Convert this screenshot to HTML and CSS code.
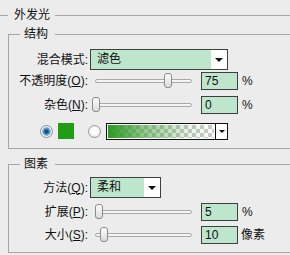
FILE: index.html
```html
<!DOCTYPE html>
<html lang="zh-CN">
<head>
  <meta charset="UTF-8">
  <title>外发光</title>
  <link rel="stylesheet" href="styles.css">
</head>
<body>
  <fieldset class="panel">
    <legend class="panel-title">外发光</legend>

    <fieldset class="group group-top">
      <legend class="group-title">结构</legend>

      <div class="row row-tall">
        <span class="label">混合模式:</span>
        <div class="select select-wide">
          <span class="select-text">滤色</span>
          <span class="select-btn"><i class="arrow"></i></span>
        </div>
      </div>

      <div class="row row-opacity">
        <span class="label">不透明度(<u>O</u>):</span>
        <div class="slider"><div class="track"></div><div class="thumb" style="left: 74px"></div></div>
        <div class="field">75</div>
        <span class="unit">%</span>
      </div>

      <div class="row row-noise">
        <span class="label">杂色(<u>N</u>):</span>
        <div class="slider"><div class="track"></div><div class="thumb" style="left: 2px"></div></div>
        <div class="field">0</div>
        <span class="unit">%</span>
      </div>

      <div class="row row-color">
        <span class="radio checked"></span>
        <span class="swatch"></span>
        <span class="radio"></span>
        <div class="gradient">
          <span class="gradient-fill"></span>
          <span class="gradient-btn"><i class="arrow arrow-small"></i></span>
        </div>
      </div>
    </fieldset>

    <fieldset class="group group-bottom">
      <legend class="group-title">图素</legend>

      <div class="row row-tall">
        <span class="label">方法(<u>Q</u>):</span>
        <div class="select select-narrow">
          <span class="select-text">柔和</span>
          <span class="select-btn"><i class="arrow"></i></span>
        </div>
      </div>

      <div class="row row-spread">
        <span class="label">扩展(<u>P</u>):</span>
        <div class="slider"><div class="track"></div><div class="thumb" style="left: 5px"></div></div>
        <div class="field">5</div>
        <span class="unit">%</span>
      </div>

      <div class="row row-size">
        <span class="label">大小(<u>S</u>):</span>
        <div class="slider"><div class="track"></div><div class="thumb" style="left: 10px"></div></div>
        <div class="field">10</div>
        <span class="unit unit-cjk">像素</span>
      </div>
    </fieldset>
  </fieldset>
</body>
</html>
```

FILE: styles.css
```css
html, body {
  margin: 0;
  padding: 0;
}
body {
  width: 290px;
  height: 255px;
  overflow: hidden;
  background: #ececec;
  color: #111;
  font-family: "Liberation Sans", "Noto Sans CJK SC", sans-serif;
  font-size: 12px;
  line-height: 14px;
}
fieldset {
  min-width: 0;
  margin: 0;
  padding: 0;
  border: 0;
}
legend {
  line-height: 14px;
  height: 14px;
}
.panel {
  margin-top: 8px;
  border-top: 1px solid #a6a6a6;
}
.panel-title {
  margin-left: 8px;
  padding: 0 5px 0 6px;
}
.group {
  margin-left: 8px;
  border-top: 1px solid #a6a6a6;
  border-left: 1px solid #a6a6a6;
  border-bottom: 1px solid #a6a6a6;
}
.group-top {
  margin-top: 5px;
  padding: 8px 0 7px 0;
}
.group-bottom {
  margin-top: 8px;
  padding: 6px 0 7px 0;
}
.group-title {
  margin-left: 11px;
  padding: 0 7px 0 4px;
}

/* rows */
.row {
  display: flex;
  align-items: center;
  height: 20px;
}
.row-tall {
  height: 21px;
}
.row-opacity {
  margin-top: 1px;
}
.row-noise {
  margin-top: 4px;
}
.row-color {
  margin-top: 6px;
}
.row-spread {
  margin-top: 4px;
}
.row-size {
  margin-top: 3px;
}
.label {
  box-sizing: border-box;
  width: 81px;
  padding-right: 2px;
  text-align: right;
  white-space: nowrap;
}
.label u {
  text-decoration-thickness: 1px;
  text-underline-offset: 1px;
}

/* dropdowns */
.select {
  box-sizing: border-box;
  display: flex;
  height: 21px;
  border: 1px solid #3f3f3f;
  background: #bee6cc;
}
.select-wide {
  width: 138px;
}
.select-narrow {
  width: 71px;
}
.select-text {
  flex: 1;
  padding-left: 6px;
  line-height: 19px;
}
.select-btn {
  width: 16px;
  background: #fff;
  display: flex;
  align-items: center;
  justify-content: center;
}
.arrow {
  width: 0;
  height: 0;
  border-left: 4px solid transparent;
  border-right: 4px solid transparent;
  border-top: 4px solid #111;
  margin-top: 1px;
}
.arrow-small {
  border-left-width: 3px;
  border-right-width: 3px;
  border-top-width: 3px;
}

/* sliders */
.slider {
  position: relative;
  width: 111px;
  height: 20px;
  display: flex;
  align-items: center;
}
.track {
  box-sizing: border-box;
  margin-left: 5px;
  width: 97px;
  height: 4px;
  border: 1px solid #a9a9a9;
  border-radius: 2px;
  background: #f4f4f4;
}
.thumb {
  position: absolute;
  top: 2px;
  box-sizing: border-box;
  width: 8px;
  height: 15px;
  border: 1px solid #8c8c8c;
  border-radius: 3px;
  background: linear-gradient(#ffffff, #dadada);
}
.field {
  box-sizing: border-box;
  width: 37px;
  height: 18px;
  border: 1px solid #3f3f3f;
  background: #bee6cc;
  padding-left: 3px;
  line-height: 16px;
}
.unit {
  margin-left: 4px;
}
.unit-cjk {
  margin-left: 3px;
}

/* colour row */
.radio {
  box-sizing: border-box;
  width: 13px;
  height: 13px;
  border: 1px solid #9a9a9a;
  border-radius: 50%;
  background: radial-gradient(circle at 50% 45%, #ffffff 0 3px, #e6e6e6 6px);
}
.radio.checked {
  margin-left: 31px;
  border-color: #8d8d8d;
  background: radial-gradient(circle at 50% 50%, #1c4f78 0 1.5px, #3a86c0 2.5px, #7fbce6 4px, #e8f2f8 4.6px, #ffffff 6px);
}
.swatch {
  width: 16px;
  height: 16px;
  margin-left: 5px;
  background: #219d14;
}
.row-color .radio:not(.checked) {
  margin-left: 14px;
}
.gradient {
  box-sizing: border-box;
  display: flex;
  width: 122px;
  height: 17px;
  margin-left: 5px;
  border: 1px solid #111;
  background: #fff;
}
.gradient-fill {
  flex: 1;
  margin: 1px;
  background:
    linear-gradient(to right, #2c9a22 0%, rgba(60, 160, 50, 0.55) 35%, rgba(90, 170, 80, 0.15) 75%, rgba(255, 255, 255, 0) 100%),
    repeating-conic-gradient(#c9c9c9 0 25%, #ffffff 0 50%) 0 0 / 8px 8px;
}
.gradient-btn {
  width: 11px;
  border-left: 1px solid #111;
  display: flex;
  align-items: center;
  justify-content: center;
}
```
